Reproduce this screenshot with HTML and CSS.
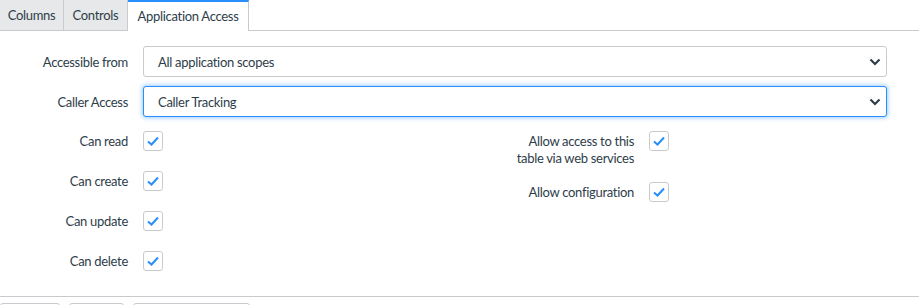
FILE: index.html
```html
<!DOCTYPE html>
<html lang="en">
<head>
    <meta charset="UTF-8">
    <meta name="viewport" content="width=device-width, initial-scale=1.0">
    <title>Application Access</title>
    <link rel="stylesheet" href="styles.css">
</head>
<body>
    <!-- Tabs -->
    <div class="tabs">
        <div class="tab tab-columns">Columns</div>
        <div class="tab tab-controls">Controls</div>
        <div class="tab active">Application Access</div>
    </div>

    <div class="form">
        <!-- Selects -->
        <div class="field">
            <label class="field-label" for="accessible">Accessible from</label>
            <div class="select-wrap">
                <select id="accessible">
                    <option>All application scopes</option>
                    <option>This application scope only</option>
                </select>
                <svg class="chevron" width="12" height="8" viewBox="0 0 12 8"><path d="M1.5 1.5 L6 6 L10.5 1.5" fill="none" stroke="#2e3d49" stroke-width="2.2"/></svg>
            </div>
        </div>

        <div class="field">
            <label class="field-label" for="caller">Caller Access</label>
            <div class="select-wrap focused">
                <select id="caller">
                    <option>Caller Tracking</option>
                    <option>Caller Restriction</option>
                    <option>None</option>
                </select>
                <svg class="chevron" width="12" height="8" viewBox="0 0 12 8"><path d="M1.5 1.5 L6 6 L10.5 1.5" fill="none" stroke="#2e3d49" stroke-width="2.2"/></svg>
            </div>
        </div>

        <!-- Checkboxes -->
        <div class="checks">
            <div class="checks-col left">
                <div class="check-row">
                    <span class="check-label">Can read</span>
                    <span class="box"><svg width="14" height="12" viewBox="0 0 14 12"><path d="M2 6.5 L5.5 9.5 L12 2.5" fill="none" stroke="#278efc" stroke-width="2"/></svg></span>
                </div>
                <div class="check-row">
                    <span class="check-label">Can create</span>
                    <span class="box"><svg width="14" height="12" viewBox="0 0 14 12"><path d="M2 6.5 L5.5 9.5 L12 2.5" fill="none" stroke="#278efc" stroke-width="2"/></svg></span>
                </div>
                <div class="check-row">
                    <span class="check-label">Can update</span>
                    <span class="box"><svg width="14" height="12" viewBox="0 0 14 12"><path d="M2 6.5 L5.5 9.5 L12 2.5" fill="none" stroke="#278efc" stroke-width="2"/></svg></span>
                </div>
                <div class="check-row">
                    <span class="check-label">Can delete</span>
                    <span class="box"><svg width="14" height="12" viewBox="0 0 14 12"><path d="M2 6.5 L5.5 9.5 L12 2.5" fill="none" stroke="#278efc" stroke-width="2"/></svg></span>
                </div>
            </div>

            <div class="checks-col right">
                <div class="check-row">
                    <span class="check-label">Allow access to this<br>table via web services</span>
                    <span class="box"><svg width="14" height="12" viewBox="0 0 14 12"><path d="M2 6.5 L5.5 9.5 L12 2.5" fill="none" stroke="#278efc" stroke-width="2"/></svg></span>
                </div>
                <div class="check-row">
                    <span class="check-label">Allow configuration</span>
                    <span class="box"><svg width="14" height="12" viewBox="0 0 14 12"><path d="M2 6.5 L5.5 9.5 L12 2.5" fill="none" stroke="#278efc" stroke-width="2"/></svg></span>
                </div>
            </div>
        </div>
    </div>

    <!-- Footer buttons (only their top edge is in view) -->
    <div class="footer">
        <span class="btn btn-a"></span>
        <span class="btn btn-b"></span>
        <span class="btn btn-c"></span>
    </div>
</body>
</html>
```

FILE: styles.css
```css
body {
    font-family: Lato, "Open Sans", sans-serif;
    font-size: 13px;
    letter-spacing: -0.3px;
    color: #2e3d49;
    margin: 0;
    padding: 0;
    background: #fff;
    overflow: hidden;
}

.tabs {
    display: flex;
    height: 30px;
    border-bottom: 1px solid #c8cacd;
}

.tab {
    box-sizing: border-box;
    height: 30px;
    line-height: 31px;
    background-color: #e6e8ea;
    border-right: 1px solid #c8cacd;
    text-align: center;
    white-space: nowrap;
    color: #2e3d49;
}

.tab-columns {
    width: 64px;
}

.tab-controls {
    width: 64px;
}

.tab.active {
    width: 121px;
    height: 31px;
    line-height: 29px;
    margin-bottom: -1px;
    background-color: #fff;
    border-top: 2px solid #278efc;
}

.form {
    padding-top: 15px;
}

.field {
    display: flex;
    align-items: center;
    margin-bottom: 9px;
}

.field-label {
    width: 128px;
    margin-right: 15px;
    text-align: right;
}

.select-wrap {
    position: relative;
    width: 744px;
}

.select-wrap select {
    appearance: none;
    -webkit-appearance: none;
    width: 100%;
    height: 31px;
    padding: 0 14px;
    font-family: inherit;
    font-size: 13px;
    letter-spacing: -0.3px;
    color: #2e3d49;
    background: #fff;
    border: 1px solid #c8cacd;
    border-radius: 3px;
    outline: none;
}

.select-wrap.focused select {
    border-color: #278efc;
    box-shadow: 0 0 4px 1px rgba(39, 142, 252, 0.45);
}

.chevron {
    position: absolute;
    right: 6px;
    top: 12px;
    pointer-events: none;
}

.checks {
    display: flex;
    padding-top: 5px;
}

.checks-col {
    display: flex;
    flex-direction: column;
    gap: 20px;
}

.checks-col.left {
    width: 459px;
}

.checks-col.right {
    gap: 15px;
}

.check-row {
    display: flex;
    align-items: flex-start;
}

.check-label {
    line-height: 17px;
    padding-top: 2px;
    text-align: right;
    margin-right: 15px;
}

.left .check-label {
    width: 128px;
}

.right .check-label {
    width: 175px;
}

.box {
    width: 18px;
    height: 18px;
    border: 1px solid #c8cacd;
    border-radius: 3px;
    display: flex;
    align-items: center;
    justify-content: center;
    flex-shrink: 0;
}

.footer {
    margin-top: 25px;
    border-top: 1px solid #c8cacd;
    padding-top: 6px;
    display: flex;
    gap: 9px;
}

.btn {
    display: block;
    height: 30px;
    box-sizing: border-box;
    border: 1px solid #c8cacd;
    border-radius: 3px;
    background: #fff;
}

.btn-a {
    width: 60px;
}

.btn-b {
    width: 55px;
}

.btn-c {
    width: 117px;
}
```
